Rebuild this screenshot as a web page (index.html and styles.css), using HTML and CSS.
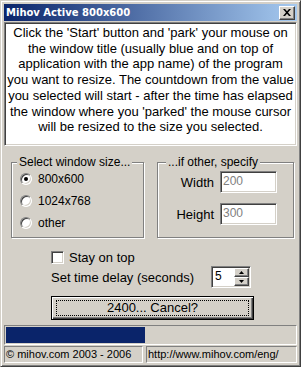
FILE: index.html
```html
<!DOCTYPE html>
<html>
    <head>
        <meta name="viewport" content="width=device-width, initial-scale=1.0">
        <link rel="stylesheet" href="styles.css">
    </head>
    <body>
        <div class="window">
            <div class="titlebar">
                <span class="title">Mihov Active 800x600</span>
                <span class="close">
                    <svg width="8" height="7" viewBox="0 0 8 7"><path d="M0 0h2l2 2.3L6 0h2L5 3.5 8 7H6L4 4.7 2 7H0l3-3.5z"/></svg>
                </span>
            </div>

            <div class="info">
                Click the 'Start' button and 'park' your mouse on<br>
                the window title (usually blue and on top of<br>
                application with the app name) of the program<br>
                you want to resize. The countdown from the value<br>
                you selected will start - after the time has elapsed<br>
                the window where you 'parked' the mouse cursor<br>
                will be resized to the size you selected.
            </div>

            <div class="groups">
                <div class="group sizes">
                    <span class="legend">Select window size...</span>
                    <label class="radio"><span class="dot checked"></span>800x600</label>
                    <label class="radio"><span class="dot"></span>1024x768</label>
                    <label class="radio"><span class="dot"></span>other</label>
                </div>
                <div class="group custom">
                    <span class="legend">...if other, specify</span>
                    <span class="lbl">Width</span>
                    <span class="field">200</span>
                    <span class="lbl">Height</span>
                    <span class="field">300</span>
                </div>
            </div>

            <label class="check"><span class="box"></span>Stay on top</label>

            <div class="delay">
                <span class="delay-label">Set time delay (seconds)</span>
                <div class="spin">
                    <span class="spin-val">5</span>
                    <span class="spin-btns">
                        <span class="spin-btn"><svg width="5" height="3" viewBox="0 0 5 3"><path d="M2.5 0L5 3H0z"/></svg></span>
                        <span class="spin-btn"><svg width="5" height="3" viewBox="0 0 5 3"><path d="M0 0h5L2.5 3z"/></svg></span>
                    </span>
                </div>
            </div>

            <button class="cancel"><span class="focus">2400... Cancel?</span></button>

            <div class="progress"><div class="fill" style="width: 48%;"></div></div>

            <div class="status">
                <div class="panel first">© mihov.com 2003 - 2006</div>
                <div class="panel">http://www.mihov.com/eng/</div>
            </div>
        </div>
    </body>
</html>
```

FILE: styles.css
```css
* {
    box-sizing: border-box;
    margin: 0;
    padding: 0;
}
body {
    margin: 0;
    font-family: "Liberation Sans", Arial, sans-serif;
    font-size: 13px;
    color: #000;
    background: #d4d0c8;
}
.window {
    width: 301px;
    height: 367px;
    padding: 3px;
    background: #d4d0c8;
    border: 1px solid;
    border-color: #d4d0c8 #404040 #404040 #d4d0c8;
    box-shadow: inset 1px 1px #fff, inset -1px -1px #808080;
    display: flex;
    flex-direction: column;
    overflow: hidden;
}
.titlebar {
    height: 17px;
    margin-bottom: 1px;
    padding: 0 2px 0 2px;
    display: flex;
    align-items: center;
    justify-content: space-between;
    background: linear-gradient(to right, #0a246a, #a6caf0);
    color: #fff;
    font: bold 10px "DejaVu Sans", sans-serif;
}
.close {
    width: 16px;
    height: 14px;
    display: flex;
    align-items: center;
    justify-content: center;
    background: #d4d0c8;
    border: 1px solid;
    border-color: #fff #404040 #404040 #fff;
    box-shadow: inset -1px -1px #808080;
}
.info {
    height: 124px;
    padding-top: 2px;
    background: #fff;
    border: 1px solid;
    border-color: #808080 #fff #fff #808080;
    box-shadow: inset 1px 1px #404040, inset -1px -1px #d4d0c8;
    text-align: center;
    line-height: 15.7px;
    white-space: nowrap;
}
.groups {
    display: flex;
    gap: 13px;
    margin: 16px 0 0 7px;
}
.group {
    position: relative;
    height: 76px;
    border: 1px solid #808080;
    box-shadow: inset 1px 1px #fff, 1px 1px #fff;
}
.legend {
    position: absolute;
    top: -8px;
    left: 5px;
    padding: 0 2px;
    background: #d4d0c8;
    font-size: 12px;
    line-height: 14px;
    white-space: nowrap;
}
.sizes {
    width: 133px;
    padding: 5px 0 0 8px;
}
.custom {
    width: 137px;
    padding-top: 8px;
    display: grid;
    grid-template-columns: 56px 57px;
    grid-auto-rows: 22px;
    column-gap: 6px;
    row-gap: 10px;
    align-items: center;
    align-content: start;
}
.custom .legend {
    left: 8px;
}
.radio {
    height: 22px;
    display: flex;
    align-items: center;
    gap: 6px;
    font-size: 12px;
}
.dot {
    position: relative;
    width: 12px;
    height: 12px;
    background: #fff;
    border: 1px solid;
    border-color: #808080 #fff #fff #808080;
    border-radius: 50%;
    box-shadow: inset 1px 1px #404040, inset -1px -1px #d4d0c8;
}
.dot.checked::after {
    content: "";
    position: absolute;
    left: 3px;
    top: 3px;
    width: 4px;
    height: 4px;
    border-radius: 50%;
    background: #000;
}
.lbl {
    text-align: right;
}
.field {
    height: 22px;
    padding: 2px 0 0 2px;
    background: #fff;
    border: 1px solid;
    border-color: #808080 #fff #fff #808080;
    box-shadow: inset 1px 1px #404040, inset -1px -1px #d4d0c8;
    color: #808080;
    font-size: 12px;
    line-height: 15px;
}
.check {
    height: 16px;
    margin: 11px 0 0 47px;
    display: flex;
    align-items: center;
    gap: 5px;
}
.box {
    width: 13px;
    height: 13px;
    background: #fff;
    border: 1px solid;
    border-color: #808080 #fff #fff #808080;
    box-shadow: inset 1px 1px #404040, inset -1px -1px #d4d0c8;
}
.delay {
    height: 22px;
    margin: 1px 0 0 47px;
    display: flex;
    align-items: center;
}
.delay-label {
    width: 160px;
}
.spin {
    width: 40px;
    height: 22px;
    padding: 1px;
    display: flex;
    background: #fff;
    border: 1px solid;
    border-color: #808080 #fff #fff #808080;
    box-shadow: inset 1px 1px #404040, inset -1px -1px #d4d0c8;
}
.spin-val {
    flex: 1;
    padding-left: 2px;
    font-size: 12px;
    line-height: 16px;
}
.spin-btns {
    width: 15px;
    display: flex;
    flex-direction: column;
}
.spin-btn {
    height: 9px;
    display: flex;
    align-items: center;
    justify-content: center;
    background: #d4d0c8;
    border: 1px solid;
    border-color: #fff #404040 #404040 #fff;
    box-shadow: inset -1px -1px #808080;
}
.cancel {
    width: 203px;
    height: 24px;
    margin: 8px 0 0 47px;
    padding: 3px 4px;
    background: #d4d0c8;
    border: 1px solid #000;
    box-shadow: inset 1px 1px #fff, inset -1px -1px #404040, inset -2px -2px #808080;
    font: inherit;
    color: #000;
}
.focus {
    display: block;
    height: 100%;
    border: 1px dotted #000;
    line-height: 14px;
}
.progress {
    height: 20px;
    margin-top: 5px;
    padding: 1px;
    border: 1px solid;
    border-color: #808080 #fff #fff #808080;
}
.fill {
    height: 100%;
    background: #0a246a;
}
.status {
    height: 17px;
    margin-top: 1px;
    display: flex;
    gap: 3px;
    font-size: 11px;
}
.panel {
    flex: 1;
    padding-left: 1px;
    border: 1px solid;
    border-color: #808080 #fff #fff #808080;
    line-height: 15px;
    white-space: nowrap;
}
.panel.first {
    flex: none;
    width: 139px;
}
```
